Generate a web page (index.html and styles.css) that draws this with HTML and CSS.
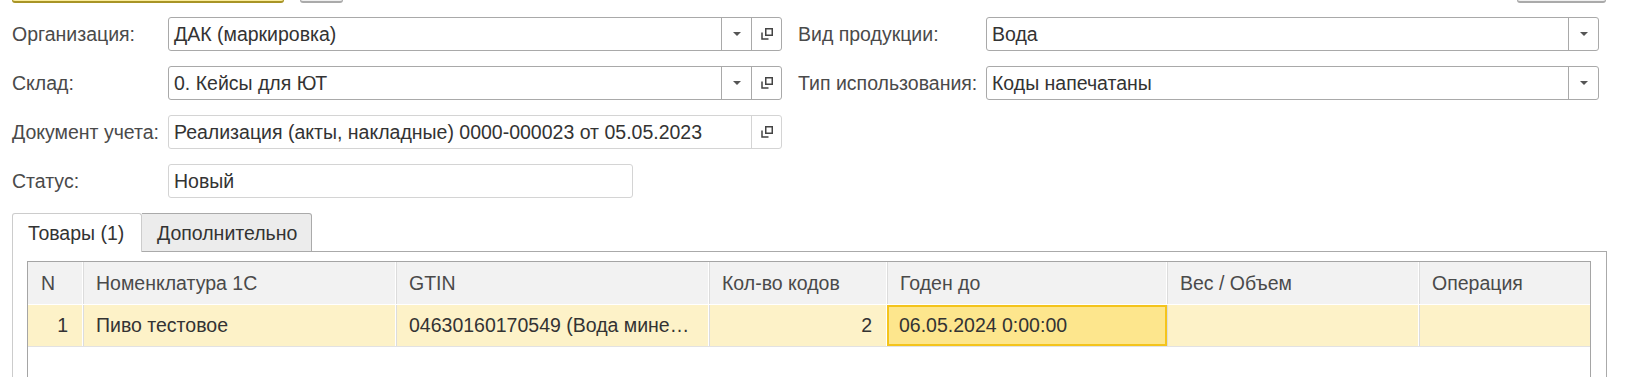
FILE: index.html
```html
<!DOCTYPE html>
<html lang="ru">
<head>
<meta charset="utf-8">
<link rel="stylesheet" href="styles.css">
</head>
<body>
<div class="toolbar">
  <div class="tb-left">
    <div class="btn btn-default"></div>
    <div class="btn btn-small"></div>
  </div>
  <div class="btn btn-more"></div>
</div>

<div class="form">
  <div class="label">Организация:</div>
  <div class="field">
    <div class="value">ДАК (маркировка)</div>
    <div class="fbtn"><span class="arrow"></span></div>
    <div class="fbtn"><svg class="open" width="12" height="12" viewBox="0 0 12 12"><rect x="4.75" y="0.75" width="6.5" height="6.5" fill="none" stroke="#444" stroke-width="1.5"/><path d="M1 4.5 V11 H7.5" fill="none" stroke="#444" stroke-width="1.5"/></svg></div>
  </div>
  <div class="spacer"></div>
  <div class="label">Вид продукции:</div>
  <div class="field">
    <div class="value">Вода</div>
    <div class="fbtn"><span class="arrow"></span></div>
  </div>

  <div class="label">Склад:</div>
  <div class="field">
    <div class="value">0. Кейсы для ЮТ</div>
    <div class="fbtn"><span class="arrow"></span></div>
    <div class="fbtn"><svg class="open" width="12" height="12" viewBox="0 0 12 12"><rect x="4.75" y="0.75" width="6.5" height="6.5" fill="none" stroke="#444" stroke-width="1.5"/><path d="M1 4.5 V11 H7.5" fill="none" stroke="#444" stroke-width="1.5"/></svg></div>
  </div>
  <div class="spacer"></div>
  <div class="label">Тип использования:</div>
  <div class="field">
    <div class="value">Коды напечатаны</div>
    <div class="fbtn"><span class="arrow"></span></div>
  </div>

  <div class="label">Документ учета:</div>
  <div class="field field-ro">
    <div class="value">Реализация (акты, накладные) 0000-000023 от 05.05.2023</div>
    <div class="fbtn"><svg class="open" width="12" height="12" viewBox="0 0 12 12"><rect x="4.75" y="0.75" width="6.5" height="6.5" fill="none" stroke="#444" stroke-width="1.5"/><path d="M1 4.5 V11 H7.5" fill="none" stroke="#444" stroke-width="1.5"/></svg></div>
  </div>
  <div class="rest"></div>

  <div class="label">Статус:</div>
  <div class="field field-ro field-short">
    <div class="value">Новый</div>
  </div>
  <div class="rest"></div>
</div>

<div class="tabs">
  <div class="tab tab-active">Товары (1)</div>
  <div class="tab">Дополнительно</div>
  <div class="tab-fill"></div>
</div>
<div class="panel">
  <div class="table">
    <div class="thead">
      <div class="cell c-n">N</div>
      <div class="cell c-nom">Номенклатура 1С</div>
      <div class="cell c-gtin">GTIN</div>
      <div class="cell c-qty">Кол-во кодов</div>
      <div class="cell c-date">Годен до</div>
      <div class="cell c-weight">Вес / Объем</div>
      <div class="cell c-op">Операция</div>
    </div>
    <div class="trow">
      <div class="cell c-n right">1</div>
      <div class="cell c-nom">Пиво тестовое</div>
      <div class="cell c-gtin"><span class="ellipsis">04630160170549 (Вода мине…</span></div>
      <div class="cell c-qty right">2</div>
      <div class="cell c-date current">06.05.2024 0:00:00</div>
      <div class="cell c-weight"></div>
      <div class="cell c-op"></div>
    </div>
  </div>
</div>
</body>
</html>
```

FILE: styles.css
```css
* { box-sizing: border-box; }
html, body { margin: 0; padding: 0; background: #fff; }
body {
  font-family: "Liberation Sans", Arial, sans-serif;
  font-size: 19.5px;
  color: #333;
  width: 1634px;
  height: 377px;
  overflow: hidden;
}

.toolbar {
  height: 3px;
  display: flex;
  justify-content: space-between;
  align-items: flex-end;
  padding: 0 28px 0 12px;
  overflow: hidden;
}
.tb-left { display: flex; gap: 16px; align-items: flex-end; }
.btn { height: 30px; border-radius: 3px; }
.btn-default { width: 272px; background: #fbed9e; border: 1px solid #a89426; border-bottom-width: 2px; }
.btn-small { width: 43px; background: #f0f0f0; border: 1px solid #aaa; border-bottom-width: 2px; }
.btn-more { width: 89px; background: #f0f0f0; border: 1px solid #aaa; border-bottom-width: 2px; }

.form {
  display: grid;
  grid-template-columns: 156px 614px 16px 188px 613px;
  grid-auto-rows: 34px;
  row-gap: 15px;
  padding: 14px 0 0 12px;
}
.label {
  color: #4a4a4a;
  line-height: 34px;
  white-space: nowrap;
}
.field {
  display: flex;
  border: 1px solid #a9a9a9;
  border-radius: 3px;
  background: #fff;
  min-width: 0;
}
.field-ro { border-color: #d4d4d4; }
.field-short { width: 465px; }
.rest { grid-column: 3 / 6; }
.value {
  flex: 1;
  padding: 0 5px;
  line-height: 32px;
  color: #333;
  white-space: nowrap;
  overflow: hidden;
}
.fbtn {
  width: 30px;
  border-left: 1px solid #a9a9a9;
  display: flex;
  align-items: center;
  justify-content: center;
}
.field-ro .fbtn { border-left-color: #d4d4d4; }
.arrow {
  width: 0; height: 0;
  border-left: 4px solid transparent;
  border-right: 4px solid transparent;
  border-top: 4px solid #555;
}
.open { display: block; }

.tabs {
  display: flex;
  margin: 15px 0 0 12px;
  height: 39px;
  width: 1595px;
}
.tab {
  padding: 0 15px;
  line-height: 38px;
  color: #333;
  background: #ececec;
  border: 1px solid #aaa;
  border-left: none;
  border-radius: 0 3px 0 0;
  white-space: nowrap;
}
.tab-active {
  width: 130px;
  background: #fff;
  border-left: 1px solid #ccc;
  border-top-color: #ccc;
  border-right-color: #ccc;
  border-bottom: none;
  border-radius: 3px 3px 0 0;
}
.tab-fill {
  flex: 1;
  border-bottom: 1px solid #aaa;
  border-right: 1px solid #aaa;
  margin-top: 38px;
}
.tab:not(.tab-active) { width: 170px; }

.panel {
  margin-left: 12px;
  width: 1595px;
  height: 125px;
  border-left: 1px solid #ccc;
  border-right: 1px solid #aaa;
  padding: 9px 0 0 14px;
  overflow: hidden;
}
.table {
  width: 1564px;
  height: 116px;
  border: 1px solid #a5a5a5;
  border-bottom: none;
}
.thead, .trow { display: flex; }
.thead {
  height: 43px;
  background: #f2f2f2;
  border-bottom: 1px solid #fff;
  color: #4a4a4a;
}
.trow {
  height: 42px;
  background: #fdf2c8;
  border-bottom: 1px solid #e2e2e2;
  color: #333;
}
.cell {
  padding: 0 13px;
  border-right: 1px solid #fff;
  box-shadow: 1px 0 0 #dcdcdc;
  display: flex;
  align-items: center;
  white-space: nowrap;
  overflow: hidden;
}
.c-n { width: 55px; }
.c-nom { width: 313px; }
.c-gtin { width: 313px; }
.c-qty { width: 178px; }
.c-date { width: 280px; }
.c-weight { width: 252px; }
.c-op { flex: 1; border-right: none; box-shadow: none; }
.right { justify-content: flex-end; padding-right: 14px; }
.ellipsis { white-space: nowrap; }
.current {
  background: #fde68d;
  border: 2px solid #f4c41c;
  padding-left: 10px;
}
```
